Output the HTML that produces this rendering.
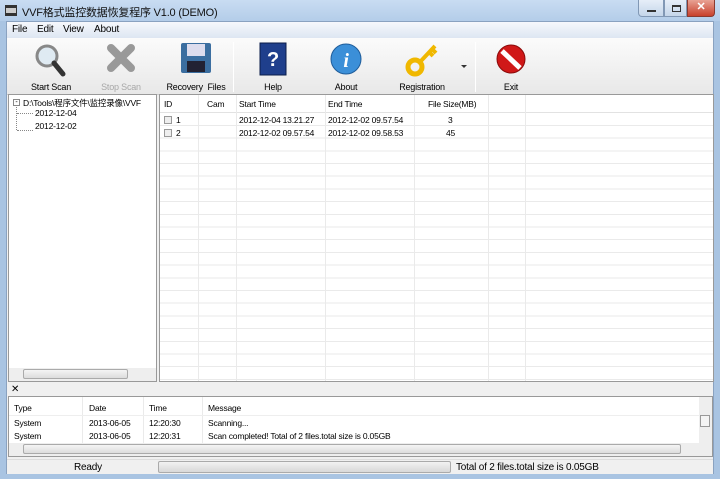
<!DOCTYPE html>
<html><head><meta charset="utf-8"><style>
*{box-sizing:border-box;margin:0;padding:0}
body{width:720px;height:479px;overflow:hidden;font-family:"Liberation Sans","Noto Sans CJK SC",sans-serif;font-size:8.5px;color:#000;background:#a9c4e2;position:relative;letter-spacing:-0.2px}
.a{position:absolute}
.title{left:0;top:0;width:720px;height:21px;background:linear-gradient(#c9dcf2,#b4cde9)}
.title span{position:absolute;left:22px;top:4px;font-size:11px;color:#111}
.inner{left:6px;top:21px;width:708px;height:453px;background:#f0f0f0;border:1px solid #8aa2c0}
.menu{left:0;top:0;width:706px;height:16px;background:linear-gradient(#f6f8fc,#dde6f2);font-size:10px}
.menu span{position:absolute;top:2px}
.tb{left:0;top:16px;width:706px;height:57px;background:linear-gradient(#fbfbfb,#e8e8e8);border-bottom:1px solid #ccc}
.btn{position:absolute;top:0;text-align:center;font-size:9px}
.btn .l{position:absolute;top:44px;left:0;width:100%;white-space:nowrap}
.sep{position:absolute;top:4px;width:1px;height:50px;background:#bbb;border-right:1px solid #fff}
.pane{background:#fff;border:1px solid #999}
.vl{position:absolute;top:0;width:1px;background:#eaeaea}
</style></head><body>
<div class="a title"><svg class="a" style="left:5px;top:5px" width="12" height="11"><rect width="12" height="11" fill="#333"/><rect x="1" y="3" width="10" height="5" fill="#ccc"/></svg><span>VVF格式监控数据恢复程序 V1.0 (DEMO)</span>
<div class="a" style="left:638px;top:0;width:26px;height:17px;border:1px solid #8198b5;border-top:0;background:linear-gradient(#e6eef8,#c5d6ea);border-radius:0 0 0 4px"><div class="a" style="left:8px;top:10px;width:9px;height:2px;background:#333"></div></div>
<div class="a" style="left:664px;top:0;width:23px;height:17px;border:1px solid #8198b5;border-top:0;background:linear-gradient(#e6eef8,#c5d6ea)"><div class="a" style="left:7px;top:5px;width:9px;height:7px;border:1px solid #333;border-top-width:2px"></div></div>
<div class="a" style="left:687px;top:0;width:28px;height:17px;border:1px solid #8a3a30;border-top:0;background:linear-gradient(#e8a294,#c8412c);border-radius:0 0 4px 0;color:#fff;font-size:11px;font-weight:bold;text-align:center;line-height:15px">✕</div></div>
<div class="a inner">
<div class="a menu"><span style="left:5px">File</span><span style="left:30px">Edit</span><span style="left:56px">View</span><span style="left:87px">About</span></div>
<div class="a tb">
<div class="btn" style="left:14px;width:60px"><svg width="60" height="44"><circle cx="26" cy="18" r="10" fill="#dfeaf2" stroke="#888" stroke-width="3"/><line x1="33" y1="25" x2="42" y2="36" stroke="#333" stroke-width="5" stroke-linecap="round"/></svg><div class="l">Start Scan</div></div>
<div class="btn" style="left:84px;width:60px;color:#a8a8a8"><svg width="60" height="44"><path d="M20 10 L40 30 M40 10 L20 30" stroke="#999" stroke-width="8" stroke-linecap="round"/></svg><div class="l">Stop Scan</div></div>
<div class="btn" style="left:154px;width:70px"><svg width="70" height="44"><rect x="20" y="5" width="30" height="30" rx="2" fill="#3b6ea0"/><rect x="26" y="6" width="18" height="12" fill="#dde"/><rect x="26" y="23" width="18" height="11" fill="#223"/></svg><div class="l">Recovery&nbsp; Files</div></div>
<div class="sep" style="left:226px"></div>
<div class="btn" style="left:236px;width:60px"><svg width="60" height="44"><rect x="17" y="5" width="26" height="32" fill="#1f3f8c" stroke="#0b1d4a"/><text x="30" y="28" font-size="20" font-weight="bold" fill="#fff" text-anchor="middle" font-family="Liberation Sans">?</text></svg><div class="l">Help</div></div>
<div class="btn" style="left:309px;width:60px"><svg width="60" height="44"><circle cx="30" cy="21" r="15" fill="#3b8fd8" stroke="#1e5c9a"/><text x="30" y="29" font-size="20" font-style="italic" font-weight="bold" fill="#fff" text-anchor="middle" font-family="Liberation Serif">i</text></svg><div class="l">About</div></div>
<div class="btn" style="left:380px;width:70px"><svg width="70" height="44"><circle cx="28" cy="29" r="7" fill="none" stroke="#f0b800" stroke-width="5"/><path d="M33 24 L48 8 M42 14 l4 4 M45 11 l4 4" stroke="#f0b800" stroke-width="4"/></svg><div class="l">Registration</div></div>
<div class="a" style="left:454px;top:27px;border:3px solid transparent;border-top:3px solid #333"></div>
<div class="sep" style="left:468px"></div>
<div class="btn" style="left:474px;width:60px"><svg width="60" height="44"><circle cx="30" cy="21" r="14" fill="#d01818" stroke="#8a0a0a"/><path d="M21 13 L39 30" stroke="#fff" stroke-width="5"/></svg><div class="l">Exit</div></div>
</div>
<div class="a pane" style="left:1px;top:72px;width:149px;height:288px">
<div class="a" style="left:4px;top:4px;width:7px;height:7px;border:1px solid #888;font-size:7px;line-height:5px;text-align:center">-</div>
<div class="a" style="left:14px;top:2px;white-space:nowrap">D:\Tools\程序文件\监控录像\VVF</div>
<div class="a" style="left:7px;top:12px;width:1px;height:23px;border-left:1px dotted #888"></div>
<div class="a" style="left:8px;top:18px;width:16px;border-top:1px dotted #888"></div>
<div class="a" style="left:8px;top:35px;width:16px;border-top:1px dotted #888"></div>
<div class="a" style="left:26px;top:13px">2012-12-04</div>
<div class="a" style="left:26px;top:26px">2012-12-02</div>
<div class="a" style="left:0;top:273px;width:147px;height:13px;background:#eee"><div class="a" style="left:14px;top:1px;width:105px;height:10px;border:1px solid #aaa;border-radius:2px;background:linear-gradient(#f4f4f4,#dcdcdc)"></div></div>
</div>
<div class="a pane" style="left:152px;top:72px;width:555px;height:288px;background:#fff repeating-linear-gradient(#fff 0 11.7px,#eaeaea 11.7px 12.7px);background-position:0 5.5px;overflow:hidden">
<div class="a" style="left:0;top:0;width:555px;height:18px;background:#fff;border-bottom:1px solid #e2e2e2"></div>
<div class="vl" style="left:38px;height:288px"></div><div class="vl" style="left:76px;height:288px"></div><div class="vl" style="left:165px;height:288px"></div><div class="vl" style="left:254px;height:288px"></div><div class="vl" style="left:328px;height:288px"></div><div class="vl" style="left:365px;height:288px"></div>
<div class="a" style="left:4px;top:4px">ID</div><div class="a" style="left:47px;top:4px">Cam</div><div class="a" style="left:79px;top:4px">Start Time</div><div class="a" style="left:168px;top:4px">End Time</div><div class="a" style="left:268px;top:4px">File Size(MB)</div>
<div class="a" style="left:4px;top:21px;width:8px;height:8px;border:1px solid #999;background:#eee"></div><div class="a" style="left:16px;top:20px">1</div><div class="a" style="left:79px;top:20px">2012-12-04 13.21.27</div><div class="a" style="left:168px;top:20px">2012-12-02 09.57.54</div><div class="a" style="left:288px;top:20px">3</div>
<div class="a" style="left:4px;top:34px;width:8px;height:8px;border:1px solid #999;background:#eee"></div><div class="a" style="left:16px;top:33px">2</div><div class="a" style="left:79px;top:33px">2012-12-02 09.57.54</div><div class="a" style="left:168px;top:33px">2012-12-02 09.58.53</div><div class="a" style="left:286px;top:33px">45</div>
</div>
<div class="a" style="left:4px;top:362px;font-size:10px">✕</div>
<div class="a pane" style="left:1px;top:374px;width:705px;height:61px">
<div class="a" style="left:5px;top:6px">Type</div><div class="a" style="left:80px;top:6px">Date</div><div class="a" style="left:140px;top:6px">Time</div><div class="a" style="left:199px;top:6px">Message</div>
<div class="vl" style="left:73px;height:46px"></div><div class="vl" style="left:134px;height:46px"></div><div class="vl" style="left:193px;height:46px"></div>
<div class="a" style="left:0;top:18px;width:690px;border-top:1px solid #eee"></div>
<div class="a" style="left:5px;top:21px">System</div><div class="a" style="left:80px;top:21px">2013-06-05</div><div class="a" style="left:140px;top:21px">12:20:30</div><div class="a" style="left:199px;top:21px">Scanning...</div>
<div class="a" style="left:5px;top:34px">System</div><div class="a" style="left:80px;top:34px">2013-06-05</div><div class="a" style="left:140px;top:34px">12:20:31</div><div class="a" style="left:199px;top:34px">Scan completed! Total of 2 files.total size is 0.05GB</div>
<div class="a" style="left:690px;top:0;width:13px;height:46px;background:#eee"><div class="a" style="left:1px;top:18px;width:10px;height:12px;border:1px solid #999;background:#f4f4f4"></div></div>
<div class="a" style="left:0;top:46px;width:703px;height:13px;background:#eee"><div class="a" style="left:14px;top:1px;width:658px;height:10px;border:1px solid #aaa;border-radius:2px;background:linear-gradient(#f4f4f4,#dcdcdc)"></div></div>
</div>
<div class="a" style="left:0;top:437px;width:706px;height:15px;background:#f0f0f0;border-top:1px solid #ddd;font-size:10px">
<div class="a" style="left:67px;top:2px">Ready</div>
<div class="a" style="left:151px;top:1px;width:293px;height:12px;border:1px solid #aaa;border-radius:2px;background:linear-gradient(#f2f2f2,#d8d8d8)"></div>
<div class="a" style="left:449px;top:2px">Total of 2 files.total size is 0.05GB</div>
</div>
</div>
</body></html>
